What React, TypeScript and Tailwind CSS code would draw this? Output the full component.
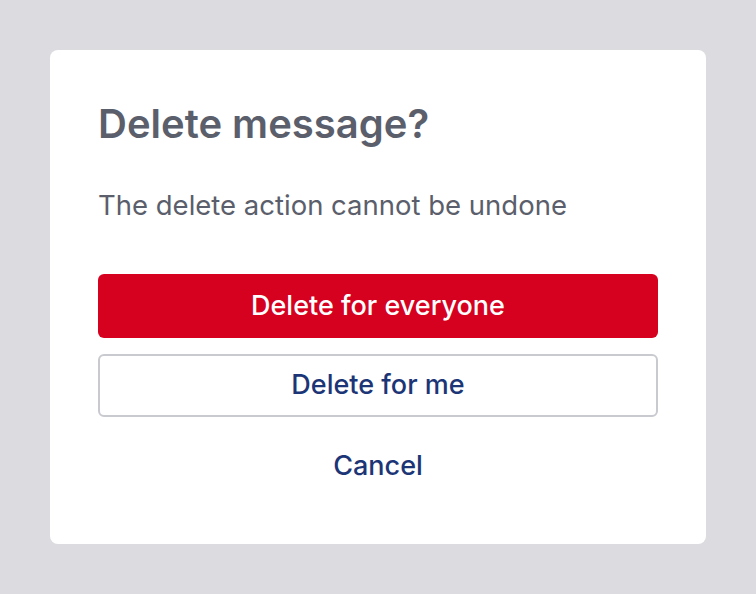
import React from "react";

export default function App() {
  return (
    <div className="min-h-screen w-full bg-[#dcdce0] p-[50px]" style={{ fontFamily: "Inter, 'Noto Sans', sans-serif" }}>
      <div className="flex h-[494px] w-[656px] flex-col rounded-lg bg-white px-12 pt-[50px]">
        <h1 className="text-[40px] font-semibold leading-[48px] text-[#5b5e6b]">Delete message?</h1>
        <p className="mt-[40px] text-[27.5px] leading-[34px] text-[#5b5e6b]">The delete action cannot be undone</p>
        <div className="mt-[52px] flex flex-col gap-4">
          <button className="h-16 w-full rounded-md bg-[#d6001f] text-[27px] font-medium text-white">
            Delete for everyone
          </button>
          <button className="h-[63px] w-full rounded-md border-2 border-[#c9cad0] bg-white text-[27px] font-medium text-[#1c3576]">
            Delete for me
          </button>
          <button className="h-[66px] w-full text-[27px] font-medium text-[#1c3576]">Cancel</button>
        </div>
      </div>
    </div>
  );
}
